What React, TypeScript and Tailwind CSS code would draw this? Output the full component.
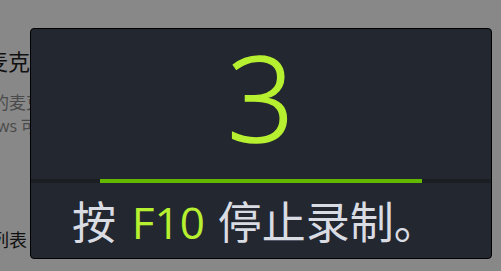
const CJK = "font-['Noto_Sans_CJK_SC',sans-serif]";

function BackdropPage() {
  return (
    <div className={`flex flex-col ${CJK}`}>
      <p className="mt-[45px] ml-[-14px] text-[22px] leading-[30px] text-[#111]">麦克风</p>
      <p className="mt-[15px] ml-[-8px] text-[17px] leading-[24px] text-[#4a4a4a]">的麦克风</p>
      <p className="ml-[-51px] text-[16px] leading-[22px] text-[#4a4a4a]">
        <span className="font-['Open_Sans',sans-serif]">Windows</span> 可以
      </p>
      <p className="mt-[89px] ml-[-9px] text-[18px] leading-[26px] text-[#111]">列表</p>
    </div>
  );
}

function CountdownOverlay() {
  return (
    <div className="absolute left-[30px] top-[28px] flex h-[231px] w-[462px] flex-col overflow-hidden rounded-[4px] border border-black bg-[#23272f]">
      <div className="flex h-[150px] items-start justify-center">
        <span className="mt-[-2px] font-['Open_Sans',sans-serif] text-[118px] font-light leading-[140px] text-[#b6f030] [-webkit-text-stroke:1.5px_#b6f030]">
          3
        </span>
      </div>
      <div className="flex h-[4px] justify-center bg-[#1b1e22]">
        <div className="h-full w-[70%] bg-[#62b800]" />
      </div>
      <div className="flex flex-1 items-center pl-[41px]">
        <p className={`${CJK} text-[44px] leading-none text-[#d9dce3]`}>
          按 <span className="ml-[6px] mr-[3px] font-['Open_Sans',sans-serif] text-[#b6f030]">F10</span> 停止录制。
        </p>
      </div>
    </div>
  );
}

export default function App() {
  return (
    <div className="relative h-[271px] w-[501px] overflow-hidden bg-[#888888]">
      <BackdropPage />
      <CountdownOverlay />
    </div>
  );
}
